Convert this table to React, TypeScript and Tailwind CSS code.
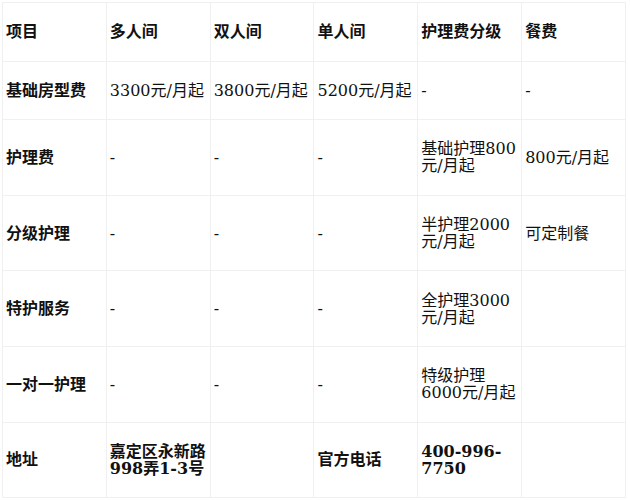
import React from "react";

type Cell = { t: string; b?: boolean };

const rows: Cell[][] = [
  [{ t: "项目", b: true }, { t: "多人间", b: true }, { t: "双人间", b: true }, { t: "单人间", b: true }, { t: "护理费分级", b: true }, { t: "餐费", b: true }],
  [{ t: "基础房型费", b: true }, { t: "3300元/月起" }, { t: "3800元/月起" }, { t: "5200元/月起" }, { t: "-" }, { t: "-" }],
  [{ t: "护理费", b: true }, { t: "-" }, { t: "-" }, { t: "-" }, { t: "基础护理800元/月起" }, { t: "800元/月起" }],
  [{ t: "分级护理", b: true }, { t: "-" }, { t: "-" }, { t: "-" }, { t: "半护理2000元/月起" }, { t: "可定制餐" }],
  [{ t: "特护服务", b: true }, { t: "-" }, { t: "-" }, { t: "-" }, { t: "全护理3000元/月起" }, { t: "" }],
  [{ t: "一对一护理", b: true }, { t: "-" }, { t: "-" }, { t: "-" }, { t: "特级护理6000元/月起" }, { t: "" }],
  [{ t: "地址", b: true }, { t: "嘉定区永新路998弄1-3号", b: true }, { t: "", b: true }, { t: "官方电话", b: true }, { t: "400-996-7750", b: true }, { t: "", b: true }],
];

export default function App() {
  return (
    <div
      className="bg-white text-[#111] w-[630px] h-[500px] overflow-hidden pt-[2px] pl-[2px]"
      style={{ fontFamily: '"DejaVu Serif", "Noto Sans CJK SC", serif' }}
    >
      <table className="table-fixed border-collapse w-[624px] text-[16px] leading-[17px]">
        <tbody>
          {rows.map((r, i) => (
            <tr key={i}>
              {r.map((c, j) => (
                <td
                  key={j}
                  className={`border border-[#f0f0f0] px-[3px] py-[20.3px] align-middle text-left break-words ${c.b ? "font-bold" : "font-normal"}`}
                >
                  {c.t}
                </td>
              ))}
            </tr>
          ))}
        </tbody>
      </table>
    </div>
  );
}
